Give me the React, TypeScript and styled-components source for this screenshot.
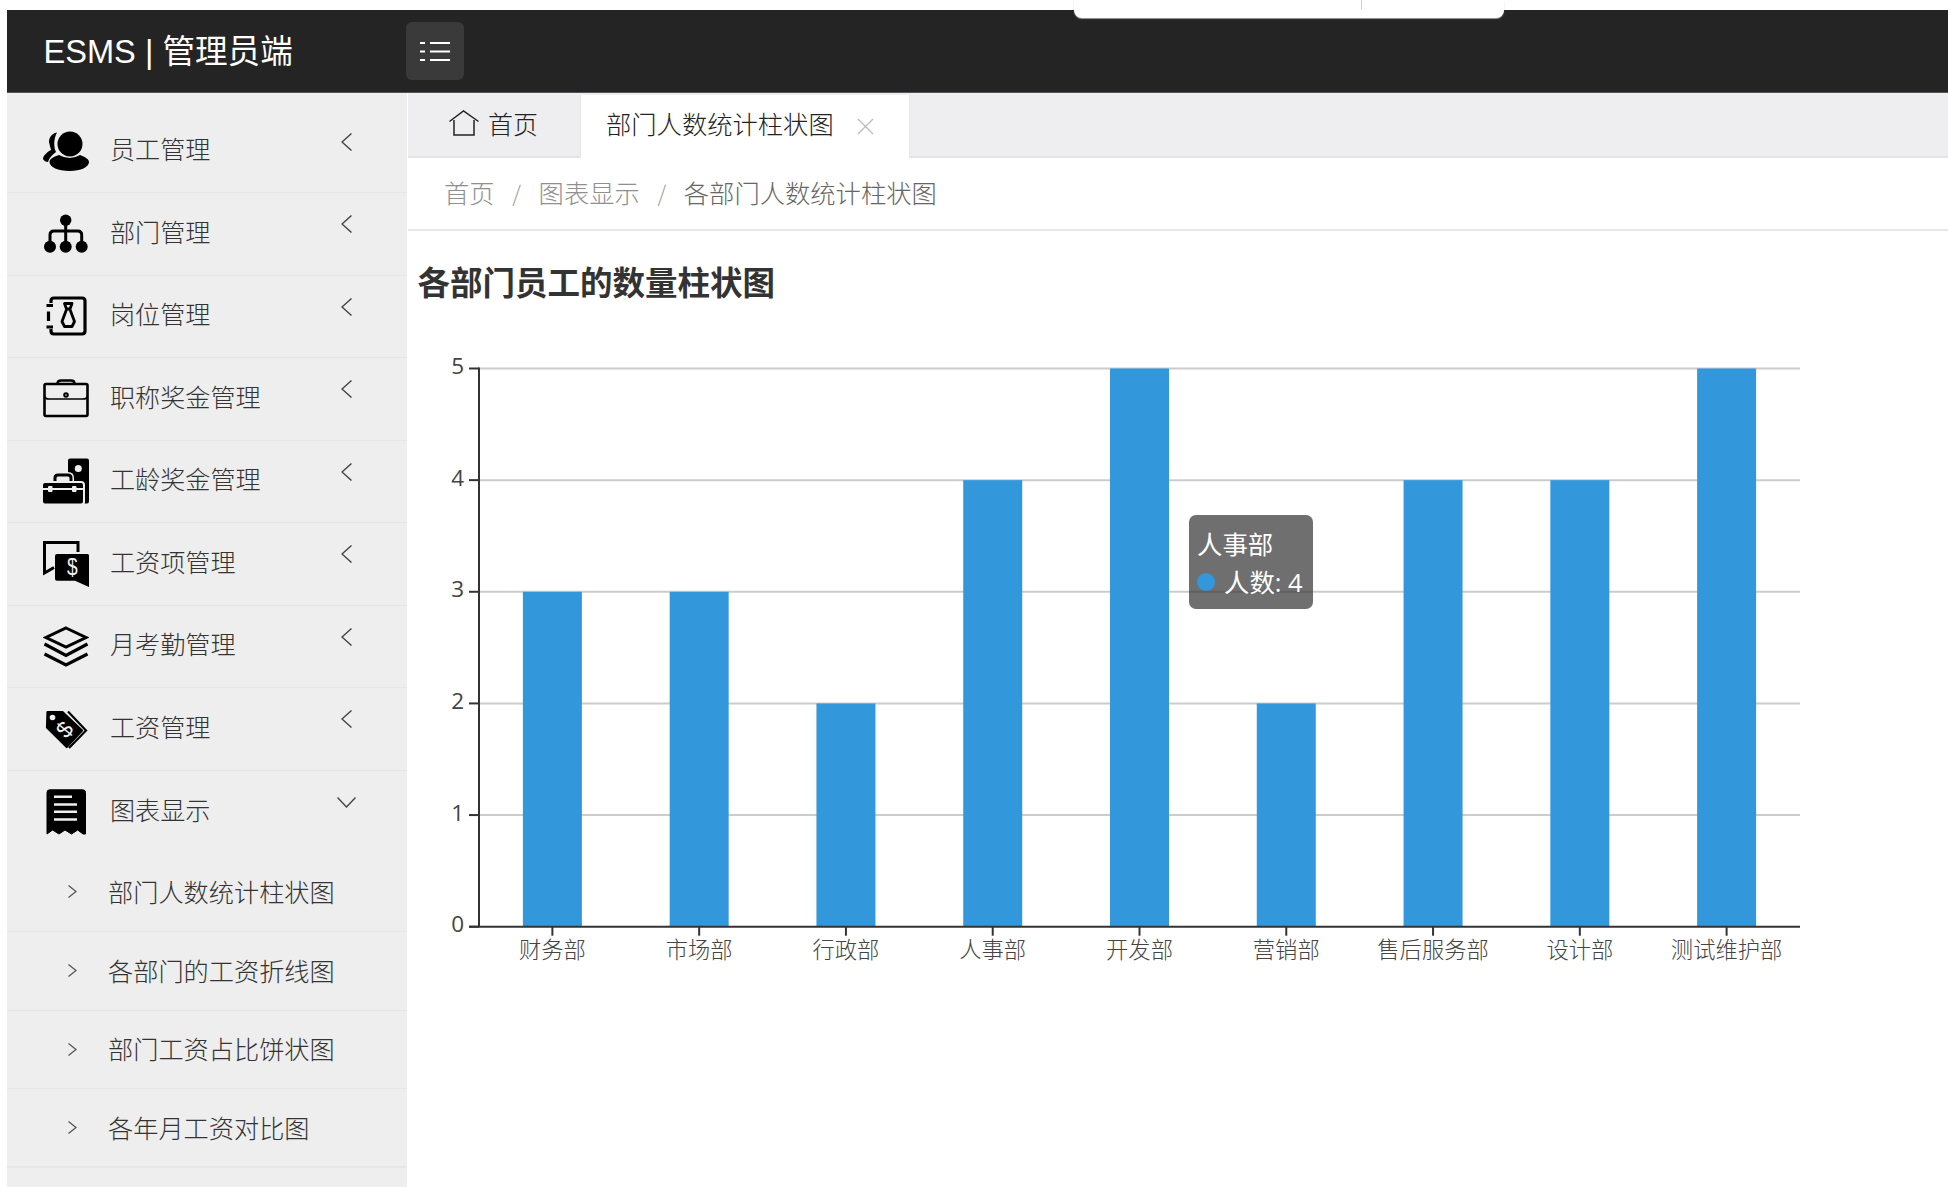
import styled, { createGlobalStyle } from "styled-components";
import type { ReactNode } from "react";

const GlobalStyle = createGlobalStyle`
 html, body {
  margin: 0;
  padding: 0;
  background: #ffffff;
 }
 * {
  box-sizing: border-box;
 }
`;

const UsersIcon = () => (
 <svg viewBox="0 0 46 46" width="46" height="46">
  <path d="M14 4.5C9 5 4.5 11 6.5 16C7 19 8 21 8 22C4 24 0 28 0 31C1 33 3 34 5 34C6 30 9 27 13 24C11 20 10 12 14 4.5Z" />
  <path d="M16 27C10 29 6.5 31 6.5 34C6.5 39 15 43 26.5 43C38 43 46 39 46 34C46 31 42 29 37 27Q27 33 16 27Z" />
  <circle cx="27" cy="16" r="12.5" />
 </svg>
);

const OrgIcon = () => (
 <svg viewBox="0 0 46 46" width="46" height="46">
  <path d="M22.7 9V36M7 36V24Q7 20 11 20H34.7Q38.7 20 38.7 24V36" fill="none" stroke="#000" strokeWidth="3" />
  <circle cx="22.7" cy="9.2" r="5.7" />
  <circle cx="7" cy="35.8" r="6" />
  <circle cx="22.7" cy="35.8" r="6" />
  <circle cx="38.7" cy="35.8" r="6" />
 </svg>
);

const BadgeIcon = () => (
 <svg viewBox="0 0 46 46" width="46" height="46" fill="none" stroke="#000">
  <path d="M8 10V8Q8 5 11 5H39Q42 5 42 8V38Q42 41 39 41H11Q8 41 8 38V36" strokeWidth="3.2" />
  <path d="M3.5 12.5H10M3.5 34H10M5.5 18.5V28" strokeWidth="3.2" />
  <path d="M21.5 10.5H29L27 16H23.5ZM23.5 16.5L19 28.5L21.5 33.5H29L31.5 28.5L27 16.5" strokeWidth="2.8" strokeLinejoin="round" />
 </svg>
);

const BriefcaseIcon = () => (
 <svg viewBox="0 0 46 46" width="46" height="46" fill="none" stroke="#000" strokeWidth="2.6">
  <rect x="1.5" y="8" width="43" height="32" rx="1.5" />
  <path d="M14.5 8V7.5Q14.5 4.5 18 4.5H28Q31.5 4.5 31.5 7.5V8" />
  <path d="M1.5 20Q2 23 6 23H40Q44 23 44.5 20" strokeWidth="1.6" />
  <circle cx="23" cy="19" r="1.8" strokeWidth="2" />
 </svg>
);

const ToolboxIcon = () => (
 <svg viewBox="0 0 46 46" width="46" height="46">
  <path d="M25 2.5Q25 .5 27 .5H44Q46 .5 46 2.5V43Q46 45.5 44 45.5H25Z" />
  <circle cx="35.3" cy="10.5" r="3.5" fill="#eeeeee" />
  <path d="M12 25V20Q12 17 15 17H25Q28 17 28 20V25" fill="none" stroke="#eeeeee" strokeWidth="6" />
  <path d="M12 25V20Q12 17 15 17H25Q28 17 28 20V25" fill="none" stroke="#000" strokeWidth="3" />
  <rect x="-1" y="24" width="42" height="22.5" rx="3" stroke="#eeeeee" strokeWidth="2" />
  <path d="M0 31H40" stroke="#eeeeee" strokeWidth="1.8" />
  <rect x="5" y="28" width="4.5" height="6" rx="1" fill="#eeeeee" />
  <rect x="29" y="28" width="4.5" height="6" rx="1" fill="#eeeeee" />
 </svg>
);

const ChatIcon = () => (
 <svg viewBox="0 0 46 46" width="46" height="46">
  <path d="M35 11V1.5H1.5V32L11 26.5" fill="none" stroke="#000" strokeWidth="3" />
  <path d="M14 13H44.5Q46 13 46 14.5V46L32 39.7H14Q12 39.7 12 38V15Q12 13 14 13Z" />
  <DollarMark x="29.3" y="34" fontSize="24" transform="translate(5.9 0) scale(.8 1)">$</DollarMark>
 </svg>
);

const LayersIcon = () => (
 <svg viewBox="0 0 46 46" width="46" height="46" fill="none" stroke="#000" strokeWidth="3.2">
  <path d="M23 5L43 14.5L23 24L3 14.5Z" strokeWidth="3" />
  <path d="M1.5 21L23 32.5L44.5 21" />
  <path d="M1.5 31L23 42L44.5 31" />
 </svg>
);

const TagIcon = () => (
 <svg viewBox="0 0 46 46" width="46" height="46">
  <path d="M4.5 6H19.5L39 24.5L23.7 41L4 21.5Z" stroke="#000" strokeWidth="2.2" strokeLinejoin="round" />
  <path d="M25 5.5L43 24.5L26 42" fill="none" stroke="#000" strokeWidth="2.2" />
  <circle cx="9.5" cy="11.5" r="2.8" fill="#eeeeee" />
  <DollarMark x="21.5" y="31.5" fontSize="23" transform="rotate(-50 21.5 23.5)">$</DollarMark>
 </svg>
);

const ReceiptIcon = () => (
 <svg viewBox="0 0 46 46" width="46" height="46">
  <path d="M6.7 .8H39.7Q42.5 .8 42.5 3.5V45L40 45L34.7 41L28.5 45L22 41L16 45L9.6 41L4 45V3.5Q4 .8 6.7 .8Z" stroke="#000" strokeLinejoin="round" />
  <path d="M11 7.8H29M11 15.5H34M11 22.8H34M11 30.5H34" stroke="#eeeeee" strokeWidth="2.5" />
 </svg>
);

const ListIcon = () => (
 <svg viewBox="0 0 30 20" width="30" height="20" stroke="#ffffff" strokeWidth="2">
  <path d="M0 2H5M10 2H30M0 10.4H5M10 10.4H30M0 19H5M10 19H30" />
 </svg>
);

const HomeIcon = () => (
 <svg viewBox="0 0 30 26" width="30" height="26" fill="none" stroke="#222" strokeWidth="1.5">
  <path d="M.5 11.5L14.5 1L29.5 11.5" />
  <path d="M5 10V25H25V10" />
 </svg>
);

const ChevronLeft = () => (
 <svg viewBox="0 0 11 18" width="11" height="18" fill="none" stroke="#444" strokeWidth="1.4">
  <path d="M10.5 .5L1 9L10.5 17.5" />
 </svg>
);

const ChevronDown = () => (
 <svg viewBox="0 0 19 11" width="19" height="11" fill="none" stroke="#444" strokeWidth="1.4">
  <path d="M.5 .5L9.5 10L18.5 .5" />
 </svg>
);

const ChevronRight = () => (
 <svg viewBox="0 0 9 13" width="9" height="13" fill="none" stroke="#555" strokeWidth="1.3">
  <path d="M.5 .5L8 6.5L.5 12.5" />
 </svg>
);

const CloseIcon = () => (
 <svg viewBox="0 0 17 17" width="17" height="17" stroke="#bbbbbb" strokeWidth="1.4">
  <path d="M1 1L16 16M16 1L1 16" />
 </svg>
);

const menuItems: { label: string; icon: ReactNode }[] = [
 { label: "员工管理", icon: <UsersIcon /> },
 { label: "部门管理", icon: <OrgIcon /> },
 { label: "岗位管理", icon: <BadgeIcon /> },
 { label: "职称奖金管理", icon: <BriefcaseIcon /> },
 { label: "工龄奖金管理", icon: <ToolboxIcon /> },
 { label: "工资项管理", icon: <ChatIcon /> },
 { label: "月考勤管理", icon: <LayersIcon /> },
 { label: "工资管理", icon: <TagIcon /> },
];

const subItems = ["部门人数统计柱状图", "各部门的工资折线图", "部门工资占比饼状图", "各年月工资对比图"];

const departments = [
 { name: "财务部", count: 3 },
 { name: "市场部", count: 3 },
 { name: "行政部", count: 2 },
 { name: "人事部", count: 4 },
 { name: "开发部", count: 5 },
 { name: "营销部", count: 2 },
 { name: "售后服务部", count: 4 },
 { name: "设计部", count: 4 },
 { name: "测试维护部", count: 5 },
];

const gridLeft = 71;
const gridRight = 1392;
const gridTop = 39.5;
const gridBottom = 597.7;
const rowStep = (gridBottom - gridTop) / 5;
const colStep = (gridRight - gridLeft) / departments.length;
const barWidth = 59;

function BarChart() {
 return (
  <svg viewBox="0 0 1500 660" width="1500" height="660">
   {[0, 1, 2, 3, 4, 5].map((n) => {
    const y = gridBottom - n * rowStep;
    return (
     <g key={n}>
      {n > 0 && <line x1={gridLeft} x2={gridRight} y1={y} y2={y} stroke="#cccccc" strokeWidth="2" />}
      <line x1={gridLeft - 10} x2={gridLeft} y1={y} y2={y} stroke="#333333" strokeWidth="2" />
      <AxisNumber x="56" y={y - 3}>
       {n}
      </AxisNumber>
     </g>
    );
   })}
   {departments.map((d, i) => {
    const cx = gridLeft + colStep * (i + 0.5);
    const h = d.count * rowStep;
    return (
     <g key={d.name}>
      <rect x={cx - barWidth / 2} y={gridBottom - h} width={barWidth} height={h} fill="#3398db" />
      <line x1={cx} x2={cx} y1={gridBottom} y2={gridBottom + 9} stroke="#333333" strokeWidth="2" />
      <AxisLabel x={cx} y="618.5">
       {d.name}
      </AxisLabel>
     </g>
    );
   })}
   <line x1={gridLeft} x2={gridLeft} y1={gridTop - 1} y2={gridBottom} stroke="#333333" strokeWidth="2" />
   <line x1={gridLeft - 10} x2={gridRight} y1={gridBottom} y2={gridBottom} stroke="#333333" strokeWidth="2" />
  </svg>
 );
}

export default function App() {
 return (
  <Page>
   <GlobalStyle />
   <TopPopup>
    <PopupDivider />
   </TopPopup>
   <Header>
    <Logo>ESMS | 管理员端</Logo>
    <MenuButton>
     <ListIcon />
    </MenuButton>
   </Header>
   <Body>
    <Sidebar>
     {menuItems.map((item) => (
      <MenuRow key={item.label}>
       <MenuIcon>{item.icon}</MenuIcon>
       <MenuText>{item.label}</MenuText>
       <Caret $right={55}>
        <ChevronLeft />
       </Caret>
      </MenuRow>
     ))}
     <MenuRow $flat>
      <MenuIcon>
       <ReceiptIcon />
      </MenuIcon>
      <MenuText>图表显示</MenuText>
      <Caret $right={51}>
       <ChevronDown />
      </Caret>
     </MenuRow>
     {subItems.map((label) => (
      <SubRow key={label}>
       <ChevronRight />
       <SubText>{label}</SubText>
      </SubRow>
     ))}
    </Sidebar>
    <Main>
     <TabBar>
      <HomeTab>
       <HomeIcon />
       首页
      </HomeTab>
      <ActiveTab>
       部门人数统计柱状图
       <CloseIcon />
      </ActiveTab>
     </TabBar>
     <Breadcrumb>
      <Crumb>首页</Crumb>
      <CrumbSep>/</CrumbSep>
      <Crumb>图表显示</Crumb>
      <CrumbSep>/</CrumbSep>
      <Crumb $current>各部门人数统计柱状图</Crumb>
     </Breadcrumb>
     <ChartTitle>各部门员工的数量柱状图</ChartTitle>
     <ChartBox>
      <BarChart />
      <Tooltip>
       <div>人事部</div>
       <TooltipRow>
        <TooltipDot />
        人数: 4
       </TooltipRow>
      </Tooltip>
     </ChartBox>
    </Main>
   </Body>
  </Page>
 );
}

const cjk = `"Noto Sans CJK SC", sans-serif`;

const DollarMark = styled.text`
 fill: #eeeeee;
 font-family: "Liberation Sans", sans-serif;
 text-anchor: middle;
`;

const AxisNumber = styled.text`
 fill: #444444;
 font-family: "Open Sans", sans-serif;
 font-size: 22.5px;
 text-anchor: end;
 dominant-baseline: central;
`;

const AxisLabel = styled.text`
 fill: #444444;
 font-family: ${cjk};
 font-weight: 300;
 font-size: 22.3px;
 text-anchor: middle;
 dominant-baseline: central;
`;

const Page = styled.div`
 position: relative;
 height: 1187px;
 overflow: hidden;
 padding: 10px 0 0 7px;
 display: flex;
 flex-direction: column;
 font-family: "Liberation Sans", ${cjk};
`;

const TopPopup = styled.div`
 position: absolute;
 top: 0;
 left: 1074px;
 width: 430px;
 height: 18px;
 background: #ffffff;
 border-radius: 0 0 8px 8px;
 box-shadow: 0 1px 1px #999999;
 z-index: 2;
`;

const PopupDivider = styled.div`
 position: absolute;
 left: 287px;
 top: 0;
 width: 1px;
 height: 9px;
 background: #cccccc;
`;

const Header = styled.header`
 height: 83px;
 flex: none;
 display: flex;
 align-items: center;
 background: #242424;
 border-bottom: 1px solid #555555;
 padding-left: 36.5px;
`;

const Logo = styled.div`
 width: 362.5px;
 color: #ffffff;
 font-size: 32.6px;
 padding-bottom: 5px;
`;

const MenuButton = styled.button`
 width: 58px;
 height: 58px;
 border: none;
 border-radius: 6px;
 background: #3a3a3a;
 display: flex;
 align-items: center;
 justify-content: center;
 padding: 0;
`;

const Body = styled.div`
 flex: 1;
 display: flex;
 min-height: 0;
`;

const Sidebar = styled.aside`
 width: 400px;
 flex: none;
 background: #eeeeee;
 padding-top: 17.5px;
`;

const MenuRow = styled.div<{ $flat?: boolean }>`
 height: 82.5px;
 display: flex;
 align-items: center;
 padding-left: 36px;
 border-bottom: ${(p) => (p.$flat ? "none" : "1px solid #e6e6e6")};
`;

const MenuIcon = styled.span`
 width: 46px;
 height: 46px;
 margin-right: 21px;
 flex: none;
 svg {
  display: block;
 }
`;

const MenuText = styled.span`
 font-family: ${cjk};
 font-weight: 300;
 font-size: 25.1px;
 color: #333333;
 padding-bottom: 6px;
`;

const Caret = styled.span<{ $right: number }>`
 margin-left: auto;
 margin-right: ${(p) => p.$right}px;
 margin-bottom: 19px;
 display: flex;
`;

const SubRow = styled.div`
 height: 78.75px;
 display: flex;
 align-items: center;
 padding-left: 61px;
 border-bottom: 1px solid #e6e6e6;
 &:last-child {
  border-bottom: 2px solid #e6e6e6;
 }
`;

const SubText = styled.span`
 margin-left: 31px;
 padding-bottom: 2px;
 font-family: ${cjk};
 font-weight: 300;
 font-size: 25.2px;
 color: #333333;
`;

const Main = styled.main`
 flex: 1;
 min-width: 0;
 margin-left: 1px;
 display: flex;
 flex-direction: column;
`;

const TabBar = styled.nav`
 height: 65px;
 flex: none;
 display: flex;
 align-items: flex-end;
 background: #eeeef0;
 border-bottom: 2px solid #e4e4e4;
`;

const HomeTab = styled.div`
 width: 172px;
 height: 63px;
 padding: 0 0 4px 41px;
 display: flex;
 align-items: center;
 gap: 9px;
 font-family: ${cjk};
 font-weight: 300;
 font-size: 25px;
 color: #222222;
`;

const ActiveTab = styled.div`
 width: 330px;
 height: 63px;
 margin-bottom: -2px;
 padding: 0 0 7px 25px;
 display: flex;
 align-items: center;
 gap: 23px;
 background: #ffffff;
 border: solid #e8e8e8;
 border-width: 0 1px;
 font-family: ${cjk};
 font-weight: 300;
 font-size: 25.3px;
 color: #222222;
 white-space: nowrap;
 svg {
  margin-top: 6px;
 }
`;

const Breadcrumb = styled.div`
 height: 73px;
 flex: none;
 display: flex;
 align-items: center;
 padding: 0 0 4px 36px;
 border-bottom: 2px solid #e6e6e6;
 font-family: ${cjk};
 font-weight: 300;
 font-size: 25.3px;
`;

const Crumb = styled.span<{ $current?: boolean }>`
 color: ${(p) => (p.$current ? "#666666" : "#909090")};
`;

const CrumbSep = styled.span`
 width: 44px;
 text-align: center;
 color: #999999;
 font-size: 22px;
`;

const ChartTitle = styled.h2`
 margin: 28px 0 26px 9.5px;
 height: 44px;
 line-height: 44px;
 font-family: ${cjk};
 font-weight: 700;
 font-size: 32.5px;
 color: #333333;
`;

const ChartBox = styled.div`
 position: relative;
 svg {
  display: block;
 }
`;

const Tooltip = styled.div`
 position: absolute;
 left: 781px;
 top: 186px;
 width: 124px;
 height: 94px;
 padding: 10px 8px;
 border-radius: 7px;
 background: rgba(50, 50, 50, 0.7);
 color: #ffffff;
 font-family: "Open Sans", ${cjk};
 font-size: 25.4px;
 line-height: 38px;
 white-space: nowrap;
`;

const TooltipRow = styled.div`
 display: flex;
 align-items: center;
 gap: 9px;
`;

const TooltipDot = styled.span`
 width: 18px;
 height: 18px;
 border-radius: 50%;
 background: #3398db;
`;
